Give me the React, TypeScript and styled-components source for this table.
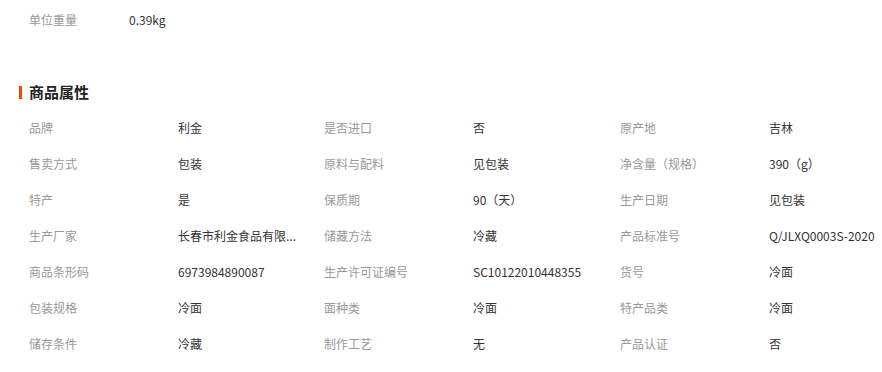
import React from "react";
import styled, { createGlobalStyle } from "styled-components";

const GlobalStyle = createGlobalStyle`
  html, body {
    margin: 0;
    padding: 0;
    background: #fff;
  }
  body {
    font-family: "Microsoft YaHei", "Noto Sans CJK SC", "Noto Sans", sans-serif;
    font-size: 12px;
    color: #333;
  }
`;

const Page = styled.div`
  width: 882px;
  padding-left: 29px;
  box-sizing: border-box;
`;

const TopRow = styled.div`
  display: flex;
  height: 40px;
  line-height: 39px;
`;

const TopLabel = styled.span`
  width: 100px;
  color: #999;
`;

const Value = styled.span`
  color: #333;
  white-space: nowrap;
`;

const Heading = styled.h3`
  position: relative;
  margin: 42px 0 0;
  height: 20px;
  line-height: 20px;
  font-size: 15px;
  font-weight: bold;
  color: #222;

  &::before {
    content: "";
    position: absolute;
    left: -10px;
    top: 4px;
    width: 3px;
    height: 13px;
    background: #ff4400;
  }
`;

const Grid = styled.div`
  margin-top: 7px;
  display: grid;
  grid-template-columns: 149px 146px 149px 147px 149px 1fr;
  grid-auto-rows: 36px;
  align-items: center;
`;

const Label = styled.span`
  color: #999;
  white-space: nowrap;
`;

const rows: [string, string][][] = [
  [["品牌", "利金"], ["是否进口", "否"], ["原产地", "吉林"]],
  [["售卖方式", "包装"], ["原料与配料", "见包装"], ["净含量（规格）", "390（g）"]],
  [["特产", "是"], ["保质期", "90（天）"], ["生产日期", "见包装"]],
  [["生产厂家", "长春市利金食品有限..."], ["储藏方法", "冷藏"], ["产品标准号", "Q/JLXQ0003S-2020"]],
  [["商品条形码", "6973984890087"], ["生产许可证编号", "SC10122010448355"], ["货号", "冷面"]],
  [["包装规格", "冷面"], ["面种类", "冷面"], ["特产品类", "冷面"]],
  [["储存条件", "冷藏"], ["制作工艺", "无"], ["产品认证", "否"]],
];

export default function App() {
  return (
    <>
      <GlobalStyle />
      <Page>
        <TopRow>
          <TopLabel>单位重量</TopLabel>
          <Value>0.39kg</Value>
        </TopRow>
        <Heading>商品属性</Heading>
        <Grid>
          {rows.map((row, i) =>
            row.map(([k, v], j) => (
              <React.Fragment key={`${i}-${j}`}>
                <Label>{k}</Label>
                <Value>{v}</Value>
              </React.Fragment>
            ))
          )}
        </Grid>
      </Page>
    </>
  );
}
